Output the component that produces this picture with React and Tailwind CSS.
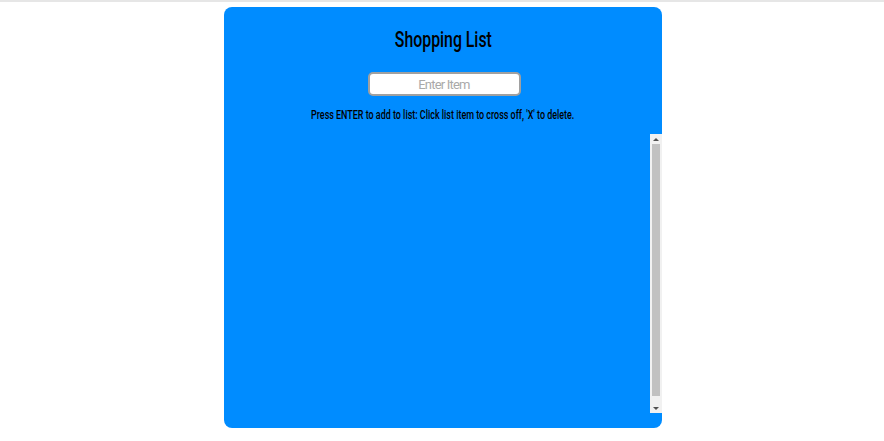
export default function App() {
  return (
    <div className="min-h-screen bg-white font-['Roboto',sans-serif]">
      <div className="h-[2px] bg-[#e6e6e6]" />
      <div className="ml-[224px] mt-[5px] flex h-[421px] w-[438px] flex-col items-center overflow-hidden rounded-lg bg-[#008cff] pt-[19px]">
        <h1 className="inline-block scale-x-[0.72] text-[22px] font-medium leading-[28px] text-black">Shopping List</h1>
        <input
          type="text"
          placeholder="Enter Item"
          className="ml-[2px] mt-[18px] h-[24px] w-[153px] rounded-[5px] border-2 border-[#a0a0a0] bg-white text-center text-[13px] tracking-[-0.8px] text-black outline-none placeholder:text-[#a9a9a9]"
        />
        <p className="mt-[12px] inline-block scale-x-[0.745] whitespace-nowrap text-[12px] font-medium leading-[14px] text-black">
          Press ENTER to add to list: Click list item to cross off, 'X' to delete.
        </p>
        <div className="relative mt-[12px] h-[279px] self-stretch">
          <div className="h-full overflow-y-auto">
            <ul />
          </div>
          <div className="absolute bottom-0 right-0 top-0 flex w-[12px] flex-col items-center bg-[#f1f1f1]">
            <div className="flex h-[10px] items-center justify-center">
              <div className="h-0 w-0 border-x-[3px] border-b-[3px] border-x-transparent border-b-[#505050]" />
            </div>
            <div className="w-[8px] flex-1 bg-[#c1c1c1]" />
            <div className="mt-[7px] flex h-[10px] items-center justify-center">
              <div className="h-0 w-0 border-x-[3px] border-t-[3px] border-x-transparent border-t-[#505050]" />
            </div>
          </div>
        </div>
      </div>
    </div>
  );
}
